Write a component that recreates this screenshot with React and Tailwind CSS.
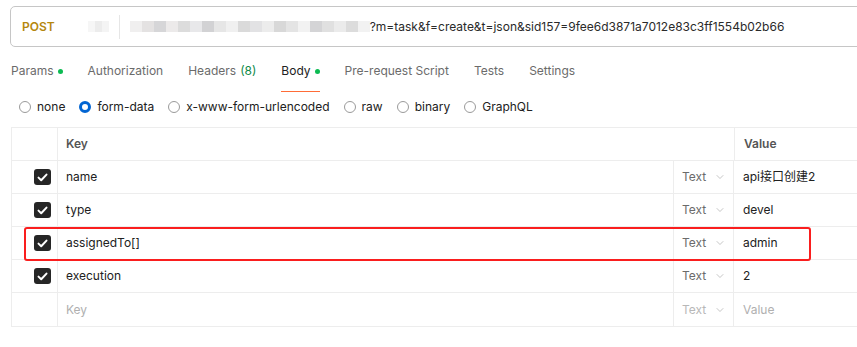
import { ChevronDown } from "lucide-react";

const blur = [
  "#f0efef", "#e4e2e2", "#d6d6d8", "#eceaea", "#dcdcdc", "#e8e8ea", "#d2d2d4", "#e6e6e6",
  "#f0f0f0", "#dadada", "#e2e2e4", "#ececec", "#d8d8d8", "#e4e4e4", "#f2f2f2", "#d4d4d6",
  "#e0e0e0", "#ebebeb", "#dcdcdc", "#f2f2f2",
];

const tabs = [
  { label: "Params", dot: true },
  { label: "Authorization" },
  { label: "Headers", count: "(8)" },
  { label: "Body", dot: true, active: true },
  { label: "Pre-request Script" },
  { label: "Tests" },
  { label: "Settings" },
];

const modes = ["none", "form-data", "x-www-form-urlencoded", "raw", "binary", "GraphQL"];

const rows = [
  { key: "name", value: "api接口创建2" },
  { key: "type", value: "devel" },
  { key: "assignedTo[]", value: "admin" },
  { key: "execution", value: "2" },
];

function Check() {
  return (
    <div className="w-[17px] h-[16px] rounded-[3px] bg-[#262626] flex items-center justify-center">
      <svg width="11" height="9" viewBox="0 0 11 9" fill="none">
        <path d="M1.5 4.6 L4.2 7.2 L9.5 1.6" stroke="white" strokeWidth="2" strokeLinecap="round" strokeLinejoin="round" />
      </svg>
    </div>
  );
}

function Row({ check, keyText, value, placeholder }) {
  return (
    <div className="flex h-[33px] border-b border-[#ededed] last:border-b-0 text-[12px]">
      <div className="w-[46px] border-r border-[#ededed] flex items-center justify-end pr-[6px]">
        {check && <Check />}
      </div>
      <div className={`w-[616px] border-r border-[#ededed] flex items-center pl-[8px] ${placeholder ? "text-[#b0b0b0]" : "text-[#212121]"}`}>
        {keyText}
      </div>
      <div className={`w-[60px] border-r border-[#ededed] flex items-center pl-[8px] gap-[8px] text-[12px] ${placeholder ? "text-[#b8b8b8]" : "text-[#6b6b6b]"}`}>
        Text
        <ChevronDown size={12} strokeWidth={1.2} className="text-[#a0a0a0]" />
      </div>
      <div className={`flex-1 flex items-center pl-[9px] ${placeholder ? "text-[#b0b0b0]" : "text-[#212121]"}`}>
        {value}
      </div>
    </div>
  );
}

export default function App() {
  return (
    <div className="relative w-[857px] h-[347px] overflow-hidden bg-white font-['Inter','Noto_Sans_CJK_SC',sans-serif]">
      {/* url bar */}
      <div className="ml-[10px] mt-[6px] h-[41px] w-[900px] border border-[#c6c6c6] rounded-[5px] flex items-center">
        <span className="ml-[11px] text-[12px] font-semibold text-[#b5870e]">POST</span>
        <div className="ml-[33px] w-[21px] h-[11px] flex">
          <div className="w-[7px] bg-[#f6f6f6]" />
          <div className="w-[7px] bg-[#ececec]" />
          <div className="w-[7px] bg-[#f4f4f4]" />
        </div>
        <div className="ml-[10px] w-px h-[24px] bg-[#e6e6e6]" />
        <div className="ml-[10px] h-[11px] flex">
          {blur.map((c, i) => (
            <div key={i} className="w-[12px] h-full" style={{ background: c }} />
          ))}
        </div>
        <span className="text-[12px] text-[#2a2a2a]">?m=task&amp;f=create&amp;t=json&amp;sid157=9fee6d3871a7012e83c3ff1554b02b66</span>
      </div>

      {/* tabs */}
      <div className="flex gap-[25px] pl-[11px] h-[45px] items-stretch text-[12px]">
        {tabs.map((t) => (
          <div
            key={t.label}
            className={`flex items-center gap-[4px] pt-[4px] border-b-[1.5px] ${t.active ? "border-[#ff6c37] text-[#212121]" : "border-transparent text-[#6b6b6b]"}`}
          >
            {t.label}
            {t.count && <span className="text-[#0f8a4a]">{t.count}</span>}
            {t.dot && <span className="w-[5px] h-[5px] rounded-full bg-[#0cbb52]" />}
          </div>
        ))}
      </div>

      {/* body modes */}
      <div className="flex gap-[14px] pl-[19px] h-[30px] items-center text-[12px] text-[#212121]">
        {modes.map((m) => (
          <div key={m} className="flex items-center gap-[6px]">
            {m === "form-data" ? (
              <span className="w-[12px] h-[12px] rounded-full border-[3.5px] border-[#0265d2] bg-white" />
            ) : (
              <span className="w-[12px] h-[12px] rounded-full border border-[#9a9a9a] bg-white" />
            )}
            {m}
          </div>
        ))}
      </div>

      {/* table */}
      <div className="ml-[11px] mt-[5px] w-[900px] border border-[#ededed]">
        <div className="flex h-[33px] border-b border-[#ededed] text-[12px] font-semibold text-[#555555]">
          <div className="w-[46px] border-r border-[#ededed]" />
          <div className="w-[677px] border-r border-[#ededed] flex items-center pl-[8px]">Key</div>
          <div className="flex-1 flex items-center pl-[9px]">Value</div>
        </div>
        {rows.map((r) => (
          <Row key={r.key} check keyText={r.key} value={r.value} />
        ))}
        <Row keyText="Key" value="Value" placeholder />
      </div>

      {/* highlight box */}
      <div className="absolute left-[24px] top-[227px] w-[787px] h-[34px] border-2 border-[#fa1e1e] rounded-[3px]" />
    </div>
  );
}
